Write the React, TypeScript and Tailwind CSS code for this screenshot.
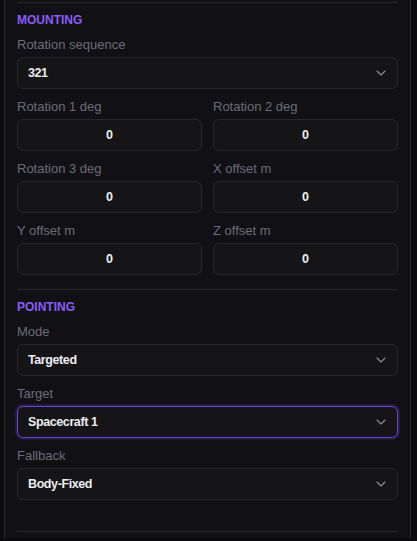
import React from "react";
import { ChevronDown } from "lucide-react";

function Label({ children }: { children: React.ReactNode }) {
  return (
    <div className="h-[18px] pt-[1px] leading-[17px] text-[13px] text-[#6c6c75] mb-[4px]">{children}</div>
  );
}

function Select({ value, focused }: { value: string; focused?: boolean }) {
  return (
    <div
      className={
        focused
          ? "h-[32px] rounded-[6px] border border-[#6a46d6] bg-[#151518] shadow-[0_0_0_2px_#241a40] flex items-center justify-between pl-[10px] pr-[8px]"
          : "h-[32px] rounded-[6px] border border-[#27272c] bg-[#151518] flex items-center justify-between pl-[10px] pr-[8px]"
      }
    >
      <span className="text-[12.5px] font-semibold tracking-[-0.4px] text-[#ededf0]">{value}</span>
      <ChevronDown size={16} strokeWidth={1.75} className="text-[#8a8a93]" />
    </div>
  );
}

function NumInput({ value }: { value: string }) {
  return (
    <div className="h-[32px] rounded-[6px] border border-[#27272c] bg-[#151518] flex items-center justify-center">
      <span className="text-[12.5px] font-semibold text-[#ededf0]">{value}</span>
    </div>
  );
}

function Heading({ children }: { children: React.ReactNode }) {
  return (
    <div className="h-[16px] pt-[1px] leading-[15px] text-[12px] font-bold text-[#8b5cf6] mb-[7px]">
      {children}
    </div>
  );
}

export default function App() {
  const grid = [
    ["Rotation 1 deg", "Rotation 2 deg"],
    ["Rotation 3 deg", "X offset m"],
    ["Y offset m", "Z offset m"],
  ];
  return (
    <div className="w-[417px] h-[541px] bg-[#0b0b0e] font-['Liberation_Sans',Arial,sans-serif] overflow-hidden">
      <div className="ml-[4px] w-[407px] h-[538px] border-x border-[#26262b] bg-[#111115] px-[12px] pt-[2px]">
        <section className="border-t border-[#26262b] pt-[9px] pb-[14px]">
          <Heading>MOUNTING</Heading>
          <Label>Rotation sequence</Label>
          <Select value="321" />
          <div className="grid grid-cols-2 gap-x-[11px]">
            {grid.map((row) =>
              row.map((l) => (
                <div key={l} className="mt-[8px]">
                  <Label>{l}</Label>
                  <NumInput value="0" />
                </div>
              ))
            )}
          </div>
        </section>
        <section className="border-t border-[#26262b] pt-[9px] pb-[31px] border-b">
          <Heading>POINTING</Heading>
          <Label>Mode</Label>
          <Select value="Targeted" />
          <div className="mt-[8px]">
            <Label>Target</Label>
            <Select value="Spacecraft 1" focused />
          </div>
          <div className="mt-[8px]">
            <Label>Fallback</Label>
            <Select value="Body-Fixed" />
          </div>
        </section>
      </div>
    </div>
  );
}
